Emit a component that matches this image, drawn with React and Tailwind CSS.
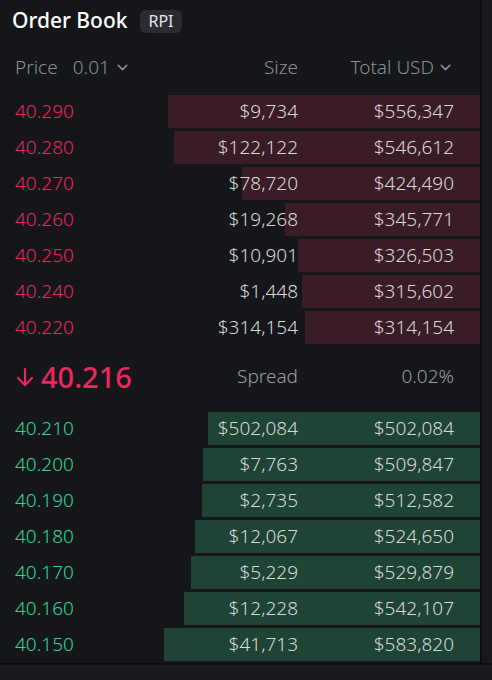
import { ChevronDown } from "lucide-react";

const asks = [
  { price: "40.290", size: "$9,734", total: "$556,347", w: 312 },
  { price: "40.280", size: "$122,122", total: "$546,612", w: 306 },
  { price: "40.270", size: "$78,720", total: "$424,490", w: 238 },
  { price: "40.260", size: "$19,268", total: "$345,771", w: 195 },
  { price: "40.250", size: "$10,901", total: "$326,503", w: 182 },
  { price: "40.240", size: "$1,448", total: "$315,602", w: 178 },
  { price: "40.220", size: "$314,154", total: "$314,154", w: 175 },
];

const bids = [
  { price: "40.210", size: "$502,084", total: "$502,084", w: 272 },
  { price: "40.200", size: "$7,763", total: "$509,847", w: 277 },
  { price: "40.190", size: "$2,735", total: "$512,582", w: 278 },
  { price: "40.180", size: "$12,067", total: "$524,650", w: 285 },
  { price: "40.170", size: "$5,229", total: "$529,879", w: 289 },
  { price: "40.160", size: "$12,228", total: "$542,107", w: 296 },
  { price: "40.150", size: "$41,713", total: "$583,820", w: 316 },
];

function Row({ row, side }) {
  const isAsk = side === "ask";
  return (
    <div className="grid h-[33px]">
      <div
        className={`col-start-1 row-start-1 justify-self-end h-full ${isAsk ? "bg-[#3a1c26]" : "bg-[#1d4434]"}`}
        style={{ width: row.w }}
      />
      <div className="col-start-1 row-start-1 flex items-center pb-[1px] text-[19px] font-[350]">
        <span className={`flex-1 pl-[15px] ${isAsk ? "text-[#ec2660]" : "text-[#2fd89a]"}`}>{row.price}</span>
        <span className="w-[140px] text-right text-[#d8d8d8]">{row.size}</span>
        <span className="w-[156px] text-right text-[#d8d8d8]">{row.total}</span>
        <span className="w-[26px]" />
      </div>
    </div>
  );
}

export default function App() {
  return (
    <div className="w-[492px] h-[680px] flex flex-col bg-[#17191c] font-['Noto_Sans',sans-serif] overflow-hidden">
      <div className="flex h-[663px]">
        <div className="w-[480px] bg-[#141619] flex flex-col">
          {/* Title */}
          <div className="flex items-center h-[42px] pl-[12px] gap-[13px]">
            <span className="text-[21px] font-medium text-white">Order Book</span>
            <span className="h-[23px] px-[8px] flex items-center rounded-[6px] bg-[#2a2c31] text-[16px] text-[#e6e6e6]">RPI</span>
          </div>

          {/* Column header */}
          <div className="flex items-center h-[50px] text-[19px] font-[350] text-[#8b8e93]">
            <div className="flex-1 flex items-center pl-[15px]">
              <span>Price</span>
              <span className="ml-[15px]">0.01</span>
              <ChevronDown size={17} strokeWidth={2} className="ml-[4px] mt-[1px]" />
            </div>
            <span className="w-[140px] text-right">Size</span>
            <div className="w-[156px] flex items-center justify-end">
              <span>Total USD</span>
              <ChevronDown size={17} strokeWidth={2} className="ml-[3px] mt-[1px]" />
            </div>
            <span className="w-[26px]" />
          </div>

          {/* Asks */}
          <div className="flex flex-col gap-[3px] mt-[3px]">
            {asks.map((r) => (
              <Row key={r.price} row={r} side="ask" />
            ))}
          </div>

          {/* Spread */}
          <div className="flex items-center h-[68px] pb-[3px]">
            <div className="flex-1 flex items-center pl-[16px] text-[#ec2660]">
              <svg width="18" height="20" viewBox="0 0 18 20" fill="none" stroke="currentColor" strokeWidth="2.2" strokeLinecap="round" strokeLinejoin="round">
                <path d="M9 2v16" />
                <path d="M2 11l7 7 7-7" />
              </svg>
              <span className="ml-[7px] text-[29px] font-medium leading-none">40.216</span>
            </div>
            <span className="w-[140px] text-right text-[19px] font-[350] text-[#9a9da2]">Spread</span>
            <span className="w-[156px] text-right text-[19px] font-[350] text-[#9a9da2]">0.02%</span>
            <span className="w-[26px]" />
          </div>

          {/* Bids */}
          <div className="flex flex-col gap-[3px]">
            {bids.map((r) => (
              <Row key={r.price} row={r} side="bid" />
            ))}
          </div>
        </div>
        <div className="w-[2px] bg-[#0c0d0f]" />
        <div className="flex-1 bg-[#17191c]" />
      </div>
      <div className="h-[2px] bg-[#0c0d0f]" />
      <div className="flex-1 bg-[#17191c]" />
    </div>
  );
}
